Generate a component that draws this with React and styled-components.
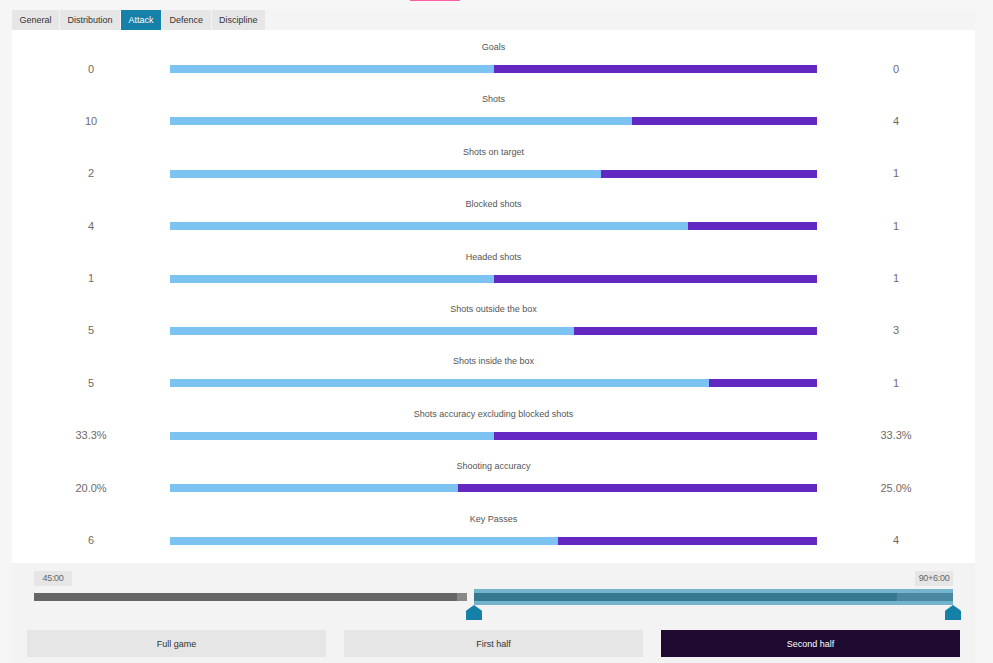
import React from "react";
import styled, { createGlobalStyle } from "styled-components";

const stats = [
  { label: "Goals", home: "0", away: "0", h: 0, a: 0 },
  { label: "Shots", home: "10", away: "4", h: 10, a: 4 },
  { label: "Shots on target", home: "2", away: "1", h: 2, a: 1 },
  { label: "Blocked shots", home: "4", away: "1", h: 4, a: 1 },
  { label: "Headed shots", home: "1", away: "1", h: 1, a: 1 },
  { label: "Shots outside the box", home: "5", away: "3", h: 5, a: 3 },
  { label: "Shots inside the box", home: "5", away: "1", h: 5, a: 1 },
  { label: "Shots accuracy excluding blocked shots", home: "33.3%", away: "33.3%", h: 33.3, a: 33.3 },
  { label: "Shooting accuracy", home: "20.0%", away: "25.0%", h: 20, a: 25 },
  { label: "Key Passes", home: "6", away: "4", h: 6, a: 4 },
];

const tabs = ["General", "Distribution", "Attack", "Defence", "Discipline"];

function App() {
  return (
    <>
      <GlobalStyle />
      <Page>
        <TopStrip>
          <PinkMark />
        </TopStrip>
        <Container>
          <TabBar>
            {tabs.map((t) => (
              <Tab key={t} $active={t === "Attack"}>
                {t}
              </Tab>
            ))}
          </TabBar>
          <Panel>
            {stats.map((s) => {
              const total = s.h + s.a;
              const pct = total === 0 ? 50 : (s.h / total) * 100;
              return (
                <StatRow key={s.label}>
                  <Label>{s.label}</Label>
                  <Num $col={1}>{s.home}</Num>
                  <Bar>
                    <HomeFill style={{ width: `${pct}%` }} />
                    <AwayFill />
                  </Bar>
                  <Num $col={3}>{s.away}</Num>
                </StatRow>
              );
            })}
          </Panel>
          <Bottom>
            <TimeRow>
              <TimeTag>45:00</TimeTag>
              <TimeTag>90+6:00</TimeTag>
            </TimeRow>
            <Slider>
              <Track>
                <GrayPart>
                  <GrayEnd />
                </GrayPart>
                <Selected>
                  <SelectedInner>
                    <InnerMain />
                    <InnerTail />
                  </SelectedInner>
                </Selected>
              </Track>
              <Handle $left={432}>
                <HandleIcon />
              </Handle>
              <Handle $left={911}>
                <HandleIcon />
              </Handle>
            </Slider>
            <ButtonRow>
              <PeriodButton>Full game</PeriodButton>
              <PeriodButton>First half</PeriodButton>
              <PeriodButton $active>Second half</PeriodButton>
            </ButtonRow>
          </Bottom>
        </Container>
      </Page>
    </>
  );
}

function HandleIcon() {
  return (
    <svg width="16" height="15" viewBox="0 0 16 15">
      <path d="M8 0 L15 5 L16 6 L16 15 L0 15 L0 6 L1 5 Z" fill="#1580a8" />
    </svg>
  );
}

export default App;

const GlobalStyle = createGlobalStyle`
  body {
    margin: 0;
    background: #f6f6f6;
    font-family: "Liberation Sans", Arial, sans-serif;
  }
`;

const Page = styled.div`
  width: 993px;
  height: 663px;
  overflow: hidden;
`;

const TopStrip = styled.div`
  height: 10px;
  display: flex;
`;

const PinkMark = styled.div`
  margin-left: 410px;
  width: 50px;
  height: 1px;
  background: #ff5fa8;
`;

const Container = styled.div`
  margin: 0 18px 0 12px;
  background: #f3f3f3;
`;

const TabBar = styled.div`
  display: flex;
  gap: 1px;
  height: 20px;
  background: #f4f4f4;
`;

const Tab = styled.div`
  display: flex;
  align-items: center;
  padding: 0 7.5px;
  font-size: 9px;
  color: ${(p) => (p.$active ? "#ffffff" : "#333")};
  background: ${(p) => (p.$active ? "#1580a8" : "#e6e6e6")};
`;

const Panel = styled.div`
  background: #ffffff;
  padding-top: 8px;
  height: 533px;
  box-sizing: border-box;
`;

const StatRow = styled.div`
  height: 52.4px;
  display: grid;
  grid-template-columns: 158px 647px 1fr;
  grid-template-rows: 12px 8px;
  row-gap: 12px;
  align-items: center;
  box-sizing: border-box;
  padding-top: 3px;
`;

const Label = styled.div`
  grid-column: 2;
  grid-row: 1;
  text-align: center;
  font-size: 9px;
  color: #555;
  line-height: 12px;
`;

const Num = styled.div`
  grid-column: ${(p) => p.$col};
  grid-row: 2;
  text-align: center;
  font-size: 11px;
  color: #6f6a66;
  line-height: 8px;
  margin-top: -1px;
`;

const Bar = styled.div`
  grid-column: 2;
  grid-row: 2;
  display: flex;
  height: 8px;
`;

const HomeFill = styled.div`
  background: #7cc3f1;
`;

const AwayFill = styled.div`
  flex: 1;
  background: #6327c2;
`;

const Bottom = styled.div`
  height: 100px;
  padding-top: 8px;
  box-sizing: border-box;
`;

const TimeRow = styled.div`
  display: flex;
  justify-content: space-between;
  margin: 0 22px;
  height: 15px;
`;

const TimeTag = styled.div`
  width: 38px;
  text-align: center;
  background: #e6e6e6;
  color: #666;
  font-size: 9px;
  line-height: 15px;
  letter-spacing: -0.3px;
`;

const Slider = styled.div`
  position: relative;
  margin: 3px 22px 0;
  height: 31px;
`;

const Track = styled.div`
  display: flex;
  gap: 7px;
  height: 16px;
`;

const GrayPart = styled.div`
  width: 433px;
  height: 8px;
  margin-top: 4px;
  background: #666;
  display: flex;
  justify-content: flex-end;
`;

const GrayEnd = styled.div`
  width: 10px;
  background: #888;
`;

const Selected = styled.div`
  flex: 1;
  background: #74b3cc;
  padding: 4px 0;
  box-sizing: border-box;
`;

const SelectedInner = styled.div`
  display: flex;
  height: 8px;
`;

const InnerMain = styled.div`
  flex: 1;
  background: #367890;
`;

const InnerTail = styled.div`
  width: 56px;
  background: #4a88a2;
  border-left: 1px solid #3a7a92;
`;

const Handle = styled.div`
  position: absolute;
  left: ${(p) => p.$left}px;
  top: 16px;
  width: 16px;
  height: 15px;
  display: flex;
`;

const ButtonRow = styled.div`
  display: flex;
  gap: 18px;
  margin: 10px 15px 0;
`;

const PeriodButton = styled.div`
  flex: 1;
  height: 27px;
  display: flex;
  align-items: center;
  justify-content: center;
  font-size: 9px;
  color: ${(p) => (p.$active ? "#ffffff" : "#333")};
  background: ${(p) => (p.$active ? "#1e0a30" : "#e6e6e6")};
`;
